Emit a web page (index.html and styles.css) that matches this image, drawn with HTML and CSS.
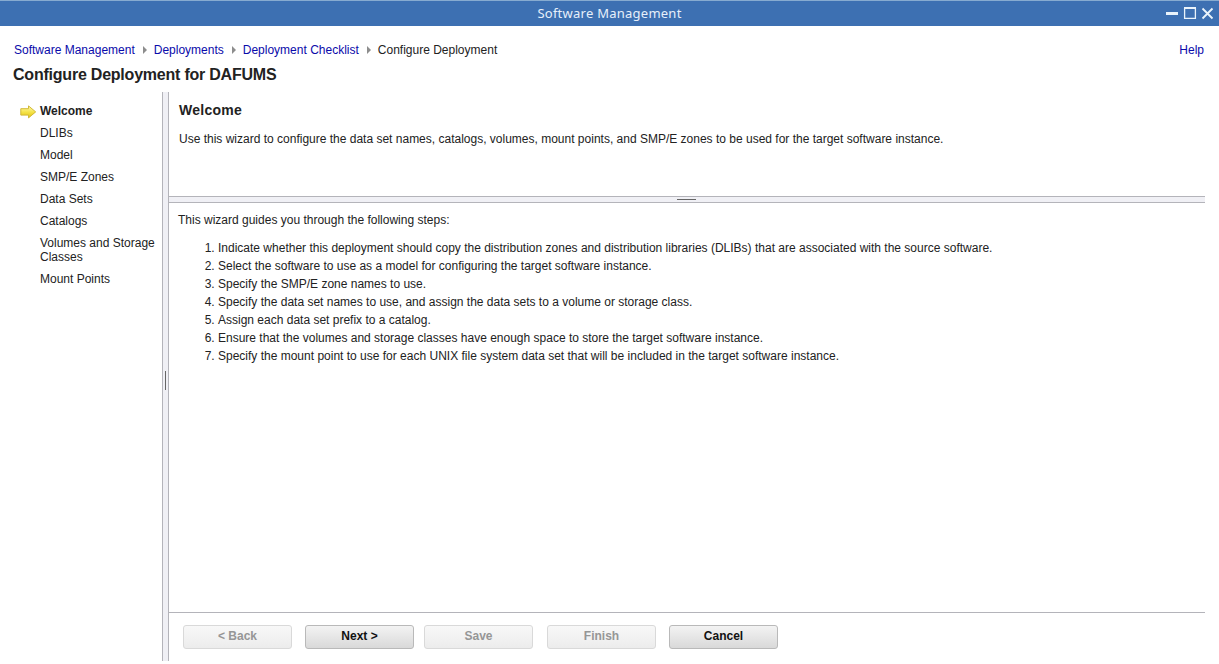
FILE: index.html
```html
<!DOCTYPE html>
<html lang="en">
<head>
<meta charset="utf-8">
<title>Software Management</title>
<link rel="stylesheet" href="styles.css">
</head>
<body>
<div class="window">
  <header class="titlebar">
    <span class="titlebar-text">Software Management</span>
    <svg class="controls" width="60" height="25" viewBox="0 0 60 25" fill="none" stroke="#e9f3fb">
      <path d="M7 12.5h12" stroke-width="3"/>
      <path d="M25 7h12" stroke-width="2"/>
      <path d="M25.600 7v10.400h10.800V7" stroke-width="1.3"/>
      <path d="M43.5 7.5l10 10m0-10l-10 10" stroke-width="1.8"/>
    </svg>
  </header>
  <nav class="crumbs">
    <a>Software Management</a><i class="sep"></i>
    <a>Deployments</a><i class="sep"></i>
    <a>Deployment Checklist</a><i class="sep"></i>
    <span>Configure Deployment</span>
    <a class="help">Help</a>
  </nav>
  <h1 class="page-title">Configure Deployment for DAFUMS</h1>
  <div class="body">
    <ul class="steps">
      <li class="current">
        <svg class="arrow" width="17" height="14" viewBox="0 0 17 14">
          <defs><linearGradient id="g" x1="0" y1="0" x2="0" y2="1"><stop offset="0" stop-color="#fffbb0"/><stop offset=".5" stop-color="#f5e44c"/><stop offset="1" stop-color="#e3c40c"/></linearGradient></defs>
          <path d="M.8 3.700h7.700V.9L15.700 6.900l-7.200 6V10.100H.8z" fill="url(#g)" stroke="#d2b938" stroke-width="1" stroke-linejoin="round"/>
        </svg>Welcome</li>
      <li>DLIBs</li>
      <li>Model</li>
      <li>SMP/E Zones</li>
      <li>Data Sets</li>
      <li>Catalogs</li>
      <li>Volumes and Storage Classes</li>
      <li>Mount Points</li>
    </ul>
    <div class="vsplit"><i></i></div>
    <main class="main">
      <section class="intro">
        <h2>Welcome</h2>
        <p>Use this wizard to configure the data set names, catalogs, volumes, mount points, and SMP/E zones to be used for the target software instance.</p>
      </section>
      <div class="hsplit"><i></i></div>
      <section class="content">
        <p>This wizard guides you through the following steps:</p>
        <ol>
          <li>Indicate whether this deployment should copy the distribution zones and distribution libraries (DLIBs) that are associated with the source software.</li>
          <li>Select the software to use as a model for configuring the target software instance.</li>
          <li>Specify the SMP/E zone names to use.</li>
          <li>Specify the data set names to use, and assign the data sets to a volume or storage class.</li>
          <li>Assign each data set prefix to a catalog.</li>
          <li>Ensure that the volumes and storage classes have enough space to store the target software instance.</li>
          <li>Specify the mount point to use for each UNIX file system data set that will be included in the target software instance.</li>
        </ol>
      </section>
      <footer class="actions">
        <button disabled>&lt; Back</button>
        <button class="next">Next &gt;</button>
        <button class="save" disabled>Save</button>
        <button class="finish" disabled>Finish</button>
        <button class="cancel">Cancel</button>
      </footer>
    </main>
  </div>
</div>
</body>
</html>
```
FILE: styles.css
```css
* { box-sizing: border-box; }
body { margin: 0; background: #fff; color: #222; font: 12px/14px "Liberation Sans", Arial, sans-serif; }
h1, h2, p, ul, ol { margin: 0; padding: 0; }
.window { height: 664px; display: flex; flex-direction: column; overflow: hidden; }
.titlebar { height: 26px; flex: none; display: grid; grid-template-columns: 60px 1fr 60px; border-top: 1px solid #87abd0; background: #3d70b2; }
.titlebar-text { grid-column: 2; justify-self: center; color: #e6effa; font: 13px/24px "Noto Sans", sans-serif; letter-spacing: .25px; }
.controls { display: block; }
.crumbs { height: 34px; flex: none; padding: 17px 15px 0 14px; display: flex; color: #222; }
.crumbs a { color: #0a0aaa; }
.sep { width: 0; height: 0; margin: 3px 7px 0 8px; border: 4px solid transparent; border-left-color: #8d8d8d; border-right: 0; }
.crumbs .help { margin-left: auto; }
.page-title { height: 32px; flex: none; padding: 5px 0 0 13px; font-size: 16px; line-height: 20px; letter-spacing: -.22px; }
.body { height: 569px; flex: none; display: flex; padding-right: 14px; }
.steps { width: 162px; flex: none; padding: 12px 5px 0 40px; list-style: none; }
.steps li { margin-bottom: 8px; }
.current { display: flex; font-weight: bold; }
.arrow { margin: 1px 3px -1px -20px; }
.vsplit { width: 7px; flex: none; border: solid #b4b4ba; border-width: 0 1px; background: #f0f0f5; padding: 279px 0 0 2px; }
.vsplit i { display: block; width: 1px; height: 19px; background: #666; }
.main { flex: 1; display: flex; flex-direction: column; }
.intro { height: 104px; padding: 9px 0 0 10px; }
.intro h2 { font-size: 14px; line-height: 18px; margin-bottom: 13px; letter-spacing: .25px; }
.hsplit { height: 7px; border: solid #b4b4ba; border-width: 1px 0; background: #f0f0f5; padding: 2px 0 0 508px; }
.hsplit i { display: block; width: 19px; height: 1px; background: #666; }
.content { flex: 1; padding: 10px 0 0 9px; }
.content ol { margin-top: 12px; padding-left: 40px; line-height: 18px; }
.actions { height: 49px; border-top: 1px solid #b4b4ba; padding: 12px 0 0 14px; display: flex; }
.actions button { width: 109px; height: 24px; margin: 0; padding: 0 0 2px; border: 1px solid #b9b9b9; border-radius: 3px; background: linear-gradient(#f3f3f3, #d9d9d9); color: #111; font: bold 12px/20px "Liberation Sans", Arial, sans-serif; }
.actions button:disabled { border-color: #d9d9d9; background: linear-gradient(#f8f8f8, #ececec); color: #969696; }
.actions .next { margin-left: 13px; }
.actions .save { margin-left: 10px; }
.actions .finish { margin-left: 14px; }
.actions .cancel { margin-left: 13px; }
```
